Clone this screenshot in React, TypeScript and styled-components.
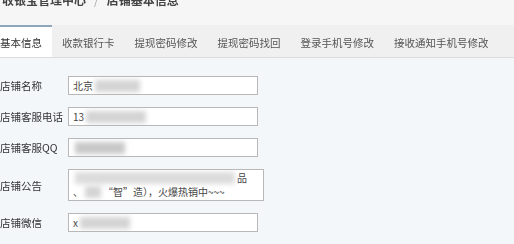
import styled, { createGlobalStyle } from "styled-components"

const Global = createGlobalStyle`
	body {
		margin: 0;
		background: #f3f7fa;
		font-family: "Noto Sans CJK SC", "Noto Sans", sans-serif;
		color: #333;
		overflow: hidden;
	}
`

const tabs = ["基本信息", "收款银行卡", "提现密码修改", "提现密码找回", "登录手机号修改", "接收通知手机号修改"]

const s = {
	Page: styled.div`
		margin-top: -8px;
		width: 514px;
	`,

	Header: styled.div`
		background: #f6f6f6;
		height: 33px;
		display: flex;
		align-items: flex-start;
		padding-left: 2px;
		font-size: 12px;
		font-weight: bold;
		color: #444;
		line-height: 16px;
		filter: blur(0.4px);
	`,

	Sep: styled.span`
		margin: 0 8px;
		font-weight: normal;
		color: #aaa;
	`,

	TabBar: styled.div`
		display: flex;
		height: 32px;
		margin-left: -10px;
		background: #f0f0f0;
		border-bottom: 1px solid #dcdcdc;
	`,

	Tab: styled.div<{ $active?: boolean }>`
		display: flex;
		align-items: center;
		padding: 0 10px;
		font-size: 10.5px;
		color: ${p => p.$active ? "#333" : "#555"};
		background: ${p => p.$active ? "#fff" : "transparent"};
		border-top: 2px solid ${p => p.$active ? "#8ea6bb" : "transparent"};
		box-sizing: border-box;
		filter: blur(0.3px);
	`,

	Form: styled.div`
		display: flex;
		flex-direction: column;
		gap: 12px;
		padding-top: 18px;
	`,

	Row: styled.div`
		display: flex;
		align-items: center;
	`,

	Label: styled.div`
		width: 68px;
		font-size: 10.5px;
		color: #333;
		filter: blur(0.3px);
	`,

	Input: styled.div<{ $wide?: boolean; $tall?: boolean }>`
		box-sizing: border-box;
		width: ${p => p.$wide ? 196 : 190}px;
		height: ${p => p.$tall ? 32 : 19}px;
		background: #fff;
		border: 1px solid #b8b8b8;
		font-size: 10px;
		color: #444;
		padding: ${p => p.$tall ? "2px 4px" : "0 4px"};
		display: flex;
		flex-direction: column;
		justify-content: center;
		line-height: 14px;
		overflow: hidden;
	`,

	Line: styled.div`
		display: flex;
		align-items: center;
		white-space: nowrap;
	`,

	Smudge: styled.span<{ $w: number; $tone?: string }>`
		display: inline-block;
		width: ${p => p.$w}px;
		height: 12px;
		background: ${p => p.$tone ?? "#d4d4d4"};
		filter: blur(2.5px);
		margin: 0 2px;
	`,
}

export default function App() {
	return (
		<s.Page>
			<Global />
			<s.Header>
				收银宝管理中心<s.Sep>/</s.Sep>店铺基本信息
			</s.Header>
			<s.TabBar>
				{tabs.map((t, i) => <s.Tab key={t} $active={i === 0}>{t}</s.Tab>)}
			</s.TabBar>
			<s.Form>
				<s.Row>
					<s.Label>店铺名称</s.Label>
					<s.Input>
						<s.Line>北京<s.Smudge $w={45} /></s.Line>
					</s.Input>
				</s.Row>
				<s.Row>
					<s.Label>店铺客服电话</s.Label>
					<s.Input>
						<s.Line>13<s.Smudge $w={60} /></s.Line>
					</s.Input>
				</s.Row>
				<s.Row>
					<s.Label>店铺客服QQ</s.Label>
					<s.Input>
						<s.Line><s.Smudge $w={50} $tone="#c8c8c8" /></s.Line>
					</s.Input>
				</s.Row>
				<s.Row>
					<s.Label>店铺公告</s.Label>
					<s.Input $wide $tall>
						<s.Line><s.Smudge $w={160} $tone="#dcdcdc" />品</s.Line>
						<s.Line>、<s.Smudge $w={16} />“智”造），火爆热销中~~~</s.Line>
					</s.Input>
				</s.Row>
				<s.Row>
					<s.Label>店铺微信</s.Label>
					<s.Input>
						<s.Line>x<s.Smudge $w={50} /></s.Line>
					</s.Input>
				</s.Row>
			</s.Form>
		</s.Page>
	)
}
